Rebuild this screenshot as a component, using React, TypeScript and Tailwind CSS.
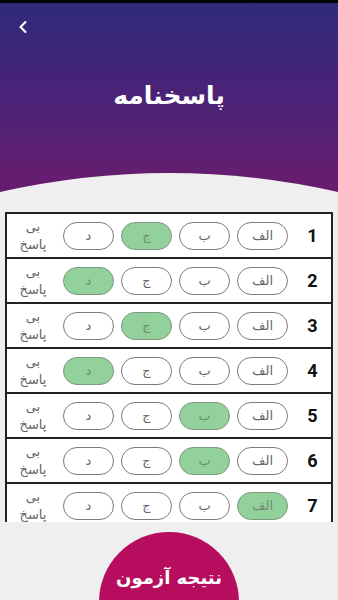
import { ChevronLeft } from 'lucide-react';

const options = ['الف', 'ب', 'ج', 'د'];

const answers = [
	{ n: 1, pick: 'ج' },
	{ n: 2, pick: 'د' },
	{ n: 3, pick: 'ج' },
	{ n: 4, pick: 'د' },
	{ n: 5, pick: 'ب' },
	{ n: 6, pick: 'ب' },
	{ n: 7, pick: 'الف' },
];

const fa = { fontFamily: '"DejaVu Sans", "Noto Sans", sans-serif' };

function Row({ n, pick }: { n: number; pick: string }) {
	return (
		<div className="flex h-[45px] items-center border-b-2 border-[#222]">
			<div
				className="w-[52px] text-center text-[13px] leading-[18px] text-[#666]"
				style={fa}
				dir="rtl"
			>
				بی
				<br />
				پاسخ
			</div>
			<div className="ml-[4px] flex flex-row-reverse gap-[7px]">
				{options.map((o) => (
					<div
						key={o}
						className={
							o === pick
								? 'flex h-[28px] w-[51px] items-center justify-center rounded-full border border-[#7d9a80] bg-[#93d19c] text-[13px] text-[#6f8a72]'
								: 'flex h-[28px] w-[51px] items-center justify-center rounded-full border border-[#7a7a7a] bg-white text-[13px] text-[#666]'
						}
						style={fa}
					>
						{o}
					</div>
				))}
			</div>
			<div className="flex-1 pl-[6px] text-center font-['Roboto'] text-[18px] font-bold text-[#111]">
				{n}
			</div>
		</div>
	);
}

export default function App() {
	return (
		<div className="relative h-[600px] w-[338px] overflow-hidden bg-[#efefef]">
			<header className="relative h-[200px] bg-gradient-to-b from-[#2e2a7b] via-[#4b2277] to-[#6c1a6d]">
				<div className="h-[3px] bg-black" />
				<button className="absolute left-[13px] top-[17px] text-white">
					<ChevronLeft size={20} strokeWidth={2.5} />
				</button>
				<h1
					className="pt-[74px] text-center text-[25px] font-bold text-white"
					style={fa}
				>
					پاسخنامه
				</h1>
				<svg
					className="absolute bottom-0 left-0"
					width="338"
					height="50"
					viewBox="0 150 338 50"
				>
					<path d="M0 192 Q169 154 338 192 L338 200 L0 200 Z" fill="#efefef" />
				</svg>
			</header>

			<section className="mt-[12px] h-[310px] overflow-hidden px-[5px]">
				<div className="border-x-2 border-t-2 border-[#222] bg-white">
					{answers.map((a) => (
						<Row key={a.n} n={a.n} pick={a.pick} />
					))}
				</div>
			</section>

			<div className="mt-[10px] flex justify-center">
				<button className="flex h-[140px] w-[140px] flex-col items-center justify-start rounded-full bg-[#b70d5e] pt-[32px]">
					<span className="text-[18px] font-bold text-white" style={fa}>
						نتیجه آزمون
					</span>
				</button>
			</div>
		</div>
	);
}
